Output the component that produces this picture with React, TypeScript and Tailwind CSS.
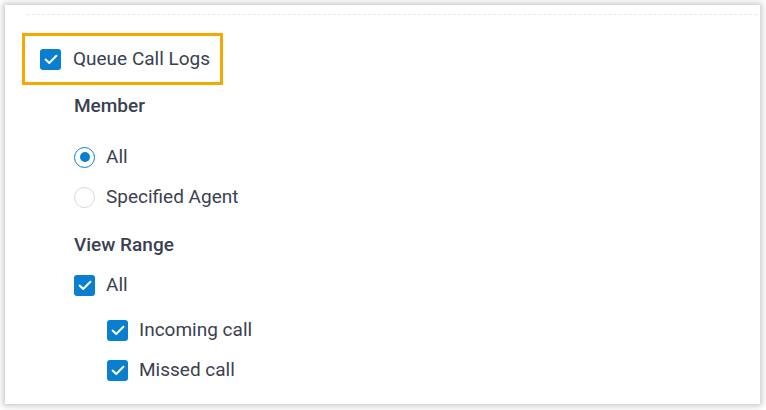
import React from "react";

function Check() {
  return (
    <span className="flex h-[21px] w-[21px] shrink-0 items-center justify-center rounded-[3px] bg-[#0a7fd0]">
      <svg width="14" height="11" viewBox="0 0 14 11" fill="none">
        <path d="M1.6 5.6 L5.2 9 L12.4 1.8" stroke="white" strokeWidth="2" strokeLinecap="round" strokeLinejoin="round" />
      </svg>
    </span>
  );
}

function Radio({ on }: { on?: boolean }) {
  return on ? (
    <span className="flex h-[21px] w-[21px] shrink-0 items-center justify-center rounded-full border-[1.5px] border-[#0a7fd0] bg-white">
      <span className="h-[10px] w-[10px] rounded-full bg-[#0a7fd0]" />
    </span>
  ) : (
    <span className="h-[21px] w-[21px] shrink-0 rounded-full border border-[#d6d8e0] bg-white" />
  );
}

export default function App() {
  return (
    <div className="h-[410px] w-[766px] bg-white p-[5px] pr-[6px] pb-[6px]" style={{ fontFamily: "Roboto, 'Liberation Sans', sans-serif" }}>
      <div className="flex h-full w-full flex-col bg-white text-[19px] leading-[22px] text-[#3b3f51] shadow-[0_0_6px_2px_rgba(0,0,0,0.22)]">
        <div className="ml-[22px] mr-[3px] mt-[9px] border-t-[1.5px] border-dashed border-[#e6e6f0]" />
        <div className="ml-[17px] mt-[18px] flex h-[52px] w-[201px] items-center gap-[12px] border-[3px] border-[#f6a800] pl-[15px]">
          <Check />
          <span>Queue Call Logs</span>
        </div>
        <div className="ml-[69px] mt-[10px] flex flex-col">
          <div className="h-[22px] font-medium">Member</div>
          <div className="mt-[29px] flex h-[22px] items-center gap-[11px]">
            <Radio on />
            <span>All</span>
          </div>
          <div className="mt-[18px] flex h-[22px] items-center gap-[11px]">
            <Radio />
            <span>Specified Agent</span>
          </div>
          <div className="mt-[26px] h-[22px] font-medium">View Range</div>
          <div className="mt-[18px] flex h-[22px] items-center gap-[11px]">
            <Check />
            <span>All</span>
          </div>
          <div className="ml-[33px] mt-[23px] flex h-[22px] items-center gap-[11px]">
            <Check />
            <span>Incoming call</span>
          </div>
          <div className="ml-[33px] mt-[18px] flex h-[22px] items-center gap-[11px]">
            <Check />
            <span>Missed call</span>
          </div>
        </div>
      </div>
    </div>
  );
}
